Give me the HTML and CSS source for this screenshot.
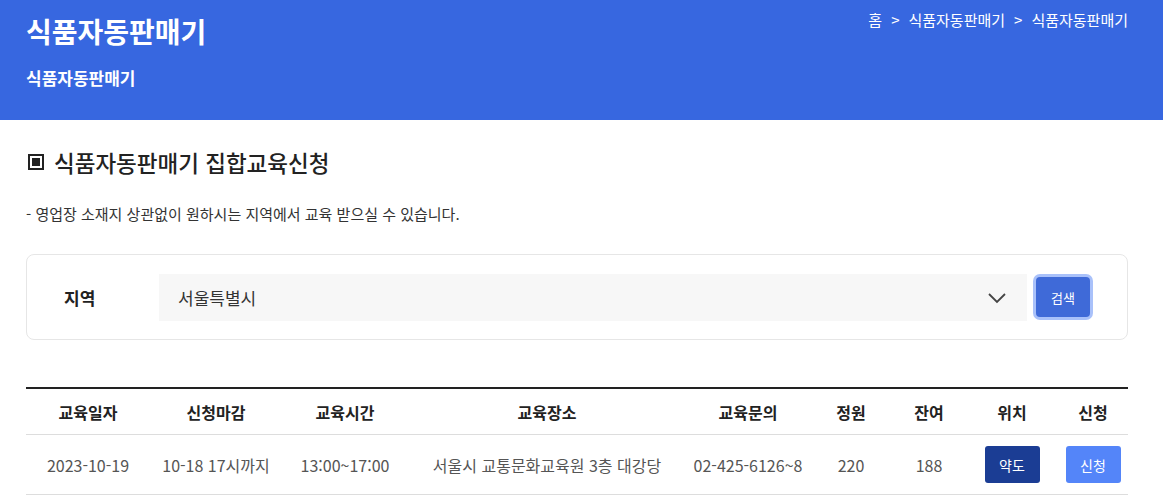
FILE: index.html
```html
<!DOCTYPE html>
<html lang="ko">

<head>
    <meta charset="UTF-8">
    <meta name="viewport" content="width=device-width, initial-scale=1.0">
    <title>식품자동판매기 집합교육신청</title>
    <link rel="stylesheet" href="styles.css">
</head>

<body>
    <header class="top">
        <div class="top-left">
            <h1 class="top-title">식품자동판매기</h1>
            <p class="top-sub">식품자동판매기</p>
        </div>
        <nav class="crumbs">
            <span>홈</span>
            <span class="sep">&gt;</span>
            <span>식품자동판매기</span>
            <span class="sep">&gt;</span>
            <span>식품자동판매기</span>
        </nav>
    </header>

    <main class="content">
        <h2 class="page-title"><span class="mark"></span>식품자동판매기 집합교육신청</h2>
        <p class="desc">- 영업장 소재지 상관없이 원하시는 지역에서 교육 받으실 수 있습니다.</p>

        <!-- 지역 검색 -->
        <div class="search-box">
            <label class="search-label" for="region">지역</label>
            <div class="select-wrap">
                <select id="region" class="select">
                    <option>서울특별시</option>
                    <option>경기도</option>
                    <option>부산광역시</option>
                </select>
                <svg class="arrow" width="20" height="12" viewBox="0 0 20 12">
                    <path d="M2 2 L10 10 L18 2" fill="none" stroke="#444" stroke-width="1.8" />
                </svg>
            </div>
            <button type="button" class="btn-search">검색</button>
        </div>

        <table class="list">
            <colgroup>
                <col style="width:124px">
                <col style="width:132px">
                <col style="width:126px">
                <col style="width:278px">
                <col style="width:124px">
                <col style="width:82px">
                <col style="width:74px">
                <col style="width:92px">
                <col style="width:70px">
            </colgroup>
            <thead>
                <tr>
                    <th>교육일자</th>
                    <th>신청마감</th>
                    <th>교육시간</th>
                    <th>교육장소</th>
                    <th>교육문의</th>
                    <th>정원</th>
                    <th>잔여</th>
                    <th>위치</th>
                    <th>신청</th>
                </tr>
            </thead>
            <tbody>
                <tr>
                    <td>2023-10-19</td>
                    <td>10-18 17시까지</td>
                    <td>13:00~17:00</td>
                    <td>서울시 교통문화교육원 3층 대강당</td>
                    <td>02-425-6126~8</td>
                    <td>220</td>
                    <td>188</td>
                    <td><button type="button" class="btn-map">약도</button></td>
                    <td><button type="button" class="btn-apply">신청</button></td>
                </tr>
            </tbody>
        </table>
    </main>
</body>

</html>
```

FILE: styles.css
```css
body {
    margin: 0;
    font-family: "Noto Sans CJK KR", "Noto Sans", sans-serif;
    color: #222;
    background: #fff;
}

.top {
    height: 120px;
    background-color: #3767e0;
    color: #fff;
    display: flex;
    justify-content: space-between;
    padding: 0 35px 0 26px;
    box-sizing: border-box;
}

.top-title {
    margin: 10px 0 0;
    font-size: 28px;
    font-weight: 700;
    line-height: 42px;
}

.top-sub {
    margin: 14px 0 0;
    font-size: 17px;
    font-weight: 700;
    line-height: 24px;
}

.crumbs {
    margin-top: 9px;
    font-size: 15px;
    line-height: 22px;
    display: flex;
    gap: 9px;
}

.content {
    padding: 0 35px 0 26px;
}

.page-title {
    margin: 26px 0 0;
    font-size: 22.5px;
    font-weight: 500;
    line-height: 32px;
    display: flex;
    align-items: center;
}

.mark {
    width: 16px;
    height: 16px;
    border: 2px solid #222;
    box-sizing: border-box;
    margin: 0 10px 0 2px;
    display: inline-flex;
    align-items: center;
    justify-content: center;
}

.mark::after {
    content: "";
    width: 8px;
    height: 8px;
    background: #222;
}

.desc {
    margin: 26px 0 0;
    font-size: 15px;
    line-height: 20px;
    color: #333;
}

.search-box {
    margin-top: 30px;
    height: 86px;
    border: 1px solid #e6e6e6;
    border-radius: 8px;
    box-sizing: border-box;
    display: flex;
    align-items: center;
    padding: 0 37px 0 37px;
}

.search-label {
    width: 95px;
    font-size: 17px;
    font-weight: 700;
}

.select-wrap {
    flex: 1;
    position: relative;
    height: 47px;
}

.select {
    width: 100%;
    height: 47px;
    border: none;
    background: #f7f7f7;
    appearance: none;
    font-family: inherit;
    font-size: 17px;
    color: #333;
    padding: 0 19px;
    outline: none;
}

.arrow {
    position: absolute;
    right: 20px;
    top: 18px;
    pointer-events: none;
}

.btn-search {
    margin-left: 9px;
    width: 54px;
    height: 40px;
    background-color: #3f6ad8;
    color: #fff;
    border: none;
    border-radius: 4px;
    box-shadow: 0 0 0 3px #a9c1fa;
    font-family: inherit;
    font-size: 13px;
    cursor: pointer;
}

.list {
    margin-top: 47px;
    width: 100%;
    border-collapse: collapse;
    table-layout: fixed;
    border-top: 2px solid #222;
}

.list th {
    height: 45px;
    font-size: 16px;
    font-weight: 700;
    border-bottom: 1px solid #ddd;
    padding: 0;
}

.list td {
    height: 59px;
    font-size: 16px;
    color: #555;
    text-align: center;
    border-bottom: 1px solid #ddd;
    padding: 0;
}

.btn-map,
.btn-apply {
    width: 55px;
    height: 37px;
    border: none;
    border-radius: 3px;
    color: #fff;
    font-family: inherit;
    font-size: 14px;
    cursor: pointer;
}

.btn-map {
    background-color: #1b3d94;
}

.btn-apply {
    background-color: #5485f9;
}
```
